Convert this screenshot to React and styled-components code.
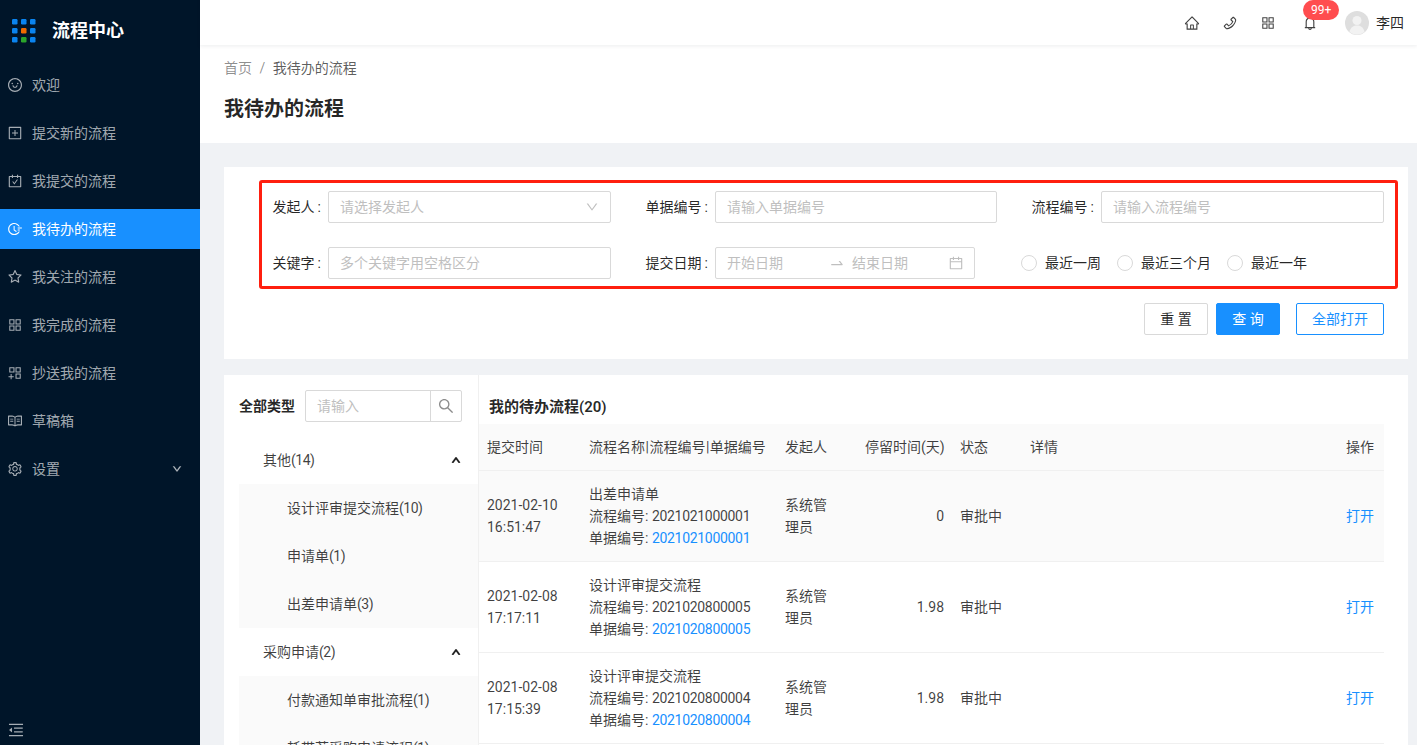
import React from "react";
import styled, { createGlobalStyle } from "styled-components";
import {
  AiOutlineSmile,
  AiOutlinePlusSquare,
  AiOutlineCarryOut,
  AiOutlineFieldTime,
  AiOutlineStar,
  AiOutlineAppstore,
  AiOutlineAppstoreAdd,
  AiOutlineRead,
  AiOutlineSetting,
  AiOutlineDown,
  AiOutlineUp,
  AiOutlineHome,
  AiOutlinePhone,
  AiOutlineBell,
  AiOutlineSearch,
  AiOutlineCalendar,
  AiOutlineSwapRight,
  AiOutlineMenuFold,
} from "react-icons/ai";

const GlobalStyle = createGlobalStyle`
  html, body {
    margin: 0;
    height: 100%;
    overflow: hidden;
  }
  body {
    font-family: "Roboto", "Noto Sans CJK SC", sans-serif;
    font-size: 14px;
    line-height: 22px;
    color: rgba(0, 0, 0, 0.85);
  }
  * {
    box-sizing: border-box;
  }
`;

const Layout = styled.div`
  display: flex;
  width: 1417px;
  height: 745px;
  overflow: hidden;
  background: #f0f2f5;
`;

const Sider = styled.aside`
  width: 200px;
  flex: none;
  height: 745px;
  background: #001529;
  display: flex;
  flex-direction: column;
`;

const Logo = styled.div`
  height: 61px;
  display: flex;
  align-items: center;
  padding-left: 12px;
  gap: 16px;
  margin-bottom: 4px;
`;

const LogoGrid = styled.svg`
  width: 24px;
  height: 24px;
  flex: none;
`;

const LogoText = styled.span`
  color: #fff;
  font-size: 18px;
  font-weight: 700;
`;

const Menu = styled.nav`
  flex: 1;
  display: flex;
  flex-direction: column;
  gap: 8px;
`;

const MenuItem = styled.div`
  height: 40px;
  display: flex;
  align-items: center;
  padding: 0 18px 0 7px;
  gap: 9px;
  color: ${(props) => (props.$active ? "#fff" : "rgba(255, 255, 255, 0.65)")};
  background: ${(props) => (props.$active ? "#1890ff" : "transparent")};
  svg {
    font-size: 16px;
    flex: none;
  }
`;

const MenuLabel = styled.span`
  flex: 1;
`;

const MenuCaret = styled(AiOutlineDown)`
  && {
    font-size: 10px;
  }
  stroke: currentColor;
  stroke-width: 60;
`;

const Collapse = styled.div`
  height: 32px;
  padding: 1px 0 0 7px;
  display: flex;
  align-items: center;
  color: rgba(255, 255, 255, 0.65);
  font-size: 18px;
`;

const Main = styled.main`
  flex: 1;
  min-width: 0;
  display: flex;
  flex-direction: column;
`;

const Header = styled.header`
  height: 45px;
  flex: none;
  background: #fff;
  box-shadow: 0 1px 4px rgba(0, 21, 41, 0.08);
  display: flex;
  justify-content: flex-end;
  align-items: center;
  padding-right: 13px;
  position: relative;
  z-index: 1;
`;

const HeaderIcon = styled.span`
  width: 38px;
  height: 45px;
  margin-left: ${(props) => props.$gap || 0}px;
  display: flex;
  align-items: center;
  justify-content: center;
  font-size: 16px;
  color: rgba(0, 0, 0, 0.75);
  position: relative;
`;

const Badge = styled.span`
  position: absolute;
  top: 0;
  left: 12px;
  height: 20px;
  padding: 0 8px;
  border-radius: 10px;
  background: #ff4d4f;
  color: #fff;
  font-size: 12px;
  line-height: 20px;
  white-space: nowrap;
`;

const User = styled.div`
  display: flex;
  align-items: center;
  gap: 7px;
  margin-left: 16px;
`;

const Avatar = styled.svg`
  width: 24px;
  height: 24px;
  flex: none;
`;

const PageHead = styled.div`
  background: #fff;
  height: 98px;
  flex: none;
  padding: 12px 24px 0;
`;

const Crumbs = styled.div`
  display: flex;
  gap: 7.5px;
  color: rgba(0, 0, 0, 0.45);
`;

const CrumbNow = styled.span`
  color: rgba(0, 0, 0, 0.65);
`;

const PageTitle = styled.h1`
  margin: 14px 0 0;
  font-size: 20px;
  line-height: 32px;
  font-weight: 600;
  color: rgba(0, 0, 0, 0.85);
`;

const Content = styled.div`
  flex: 1;
  min-height: 0;
  padding: 24px 9px 0 24px;
  display: flex;
  flex-direction: column;
  gap: 16px;
`;

const SearchCard = styled.section`
  background: #fff;
  padding: 13px 10px 24px 35px;
  flex: none;
`;

const Highlight = styled.div`
  border: 3px solid #ff1f0f;
  border-radius: 3px;
  padding: 8px 11px 7px 0;
  display: grid;
  grid-template-columns: 349px 386px 387px;
  row-gap: 24px;
`;

const FormItem = styled.div`
  display: flex;
  align-items: center;
  gap: 7px;
`;

const FormLabel = styled.label`
  width: ${(props) => props.$width}px;
  flex: none;
  text-align: right;
  color: rgba(0, 0, 0, 0.85);
`;

const Colon = styled.span`
  margin-left: 3px;
`;

const Field = styled.div`
  width: ${(props) => props.$width}px;
  height: 32px;
  flex: none;
  display: flex;
  align-items: center;
  border: 1px solid #d9d9d9;
  border-radius: 2px;
  padding: 0 ${(props) => props.$right || 11}px 0 11px;
  color: #bfbfbf;
  background: #fff;
  svg {
    flex: none;
  }
`;

const FieldText = styled.span`
  flex: 1;
  white-space: nowrap;
`;

const DateText = styled.span`
  width: 102px;
`;

const DateArrow = styled.span`
  width: 23px;
  display: flex;
  font-size: 16px;
`;

const RadioRow = styled.div`
  display: flex;
  align-items: center;
  gap: 16px;
  padding-left: 24px;
`;

const Radio = styled.label`
  display: flex;
  align-items: center;
  gap: 8px;
`;

const RadioDot = styled.span`
  width: 16px;
  height: 16px;
  border-radius: 50%;
  border: 1px solid #d9d9d9;
  background: #fff;
`;

const Actions = styled.div`
  display: flex;
  justify-content: flex-end;
  gap: 8px;
  margin: 14px 14px 0 0;
`;

const Button = styled.button`
  height: 32px;
  width: ${(props) => props.$width}px;
  margin-left: ${(props) => props.$gap || 0}px;
  border-radius: 2px;
  font: inherit;
  padding: 0;
  border: 1px solid ${(props) => (props.$tone === "plain" ? "#d9d9d9" : "#1890ff")};
  background: ${(props) => (props.$tone === "primary" ? "#1890ff" : "#fff")};
  color: ${(props) =>
    props.$tone === "primary" ? "#fff" : props.$tone === "ghost" ? "#1890ff" : "rgba(0, 0, 0, 0.85)"};
`;

const ListCard = styled.section`
  background: #fff;
  flex: 1;
  min-height: 0;
  display: flex;
  overflow: hidden;
`;

const TypePanel = styled.div`
  width: 255px;
  flex: none;
  padding: 15px 0 0 15px;
  border-right: 1px solid #f0f0f0;
`;

const TypeHead = styled.div`
  display: flex;
  align-items: center;
  gap: 10px;
  margin-bottom: 14px;
`;

const Strong = styled.span`
  font-weight: 600;
  color: rgba(0, 0, 0, 0.85);
`;

const TypeSearch = styled.div`
  width: 157px;
  height: 32px;
  display: flex;
  border: 1px solid #d9d9d9;
  border-radius: 2px;
  color: #bfbfbf;
`;

const TypeInput = styled.span`
  flex: 1;
  padding: 4px 11px;
`;

const TypeButton = styled.span`
  width: 31px;
  flex: none;
  display: flex;
  align-items: center;
  justify-content: center;
  border-left: 1px solid #d9d9d9;
  color: rgba(0, 0, 0, 0.45);
  font-size: 18px;
`;

const TreeRow = styled.div`
  height: 48px;
  display: flex;
  align-items: center;
  justify-content: space-between;
  padding: 0 17px 0 24px;
  color: rgba(0, 0, 0, 0.75);
  svg {
    font-size: 10px;
    stroke: currentColor;
    stroke-width: 110;
  }
`;

const TreeChildren = styled.div`
  background: #fafafa;
`;

const TreeChild = styled.div`
  height: 48px;
  display: flex;
  align-items: center;
  padding-left: 48px;
  white-space: nowrap;
  color: rgba(0, 0, 0, 0.75);
`;

const Count = styled.span`
  letter-spacing: -0.5px;
`;

const ListPanel = styled.div`
  flex: 1;
  min-width: 0;
  padding-right: 24px;
`;

const ListTitle = styled.div`
  height: 49px;
  padding: 21px 0 0 10px;
  font-size: 15px;
  font-weight: 600;
`;

const Table = styled.table`
  width: 905px;
  table-layout: fixed;
  border-collapse: collapse;
`;

const Th = styled.th`
  height: 46px;
  padding: 0 ${(props) => props.$right || 8}px 0 8px;
  background: #fafafa;
  border-bottom: 1px solid #f0f0f0;
  font-weight: 400;
  white-space: nowrap;
  text-align: ${(props) => props.$align || "left"};
  color: rgba(0, 0, 0, 0.75);
`;

const Pipe = styled.span`
  padding: 0 0.5px;
`;

const Tr = styled.tr`
  background: ${(props) => (props.$hover ? "#fafafa" : "#fff")};
`;

const Td = styled.td`
  height: 91px;
  padding: 0 ${(props) => props.$right || 8}px 0 8px;
  border-bottom: 1px solid #f0f0f0;
  text-align: ${(props) => props.$align || "left"};
  color: rgba(0, 0, 0, 0.75);
`;

const Starter = styled.div`
  max-width: 50px;
`;

const Num = styled.span`
  letter-spacing: -0.3px;
`;

const OpenLink = styled.a`
  color: #1890ff;
`;

const menu = [
  ["欢迎", AiOutlineSmile],
  ["提交新的流程", AiOutlinePlusSquare],
  ["我提交的流程", AiOutlineCarryOut],
  ["我待办的流程", AiOutlineFieldTime, true],
  ["我关注的流程", AiOutlineStar],
  ["我完成的流程", AiOutlineAppstore],
  ["抄送我的流程", AiOutlineAppstoreAdd],
  ["草稿箱", AiOutlineRead],
];

const rows = [
  {
    time: ["2021-02-10", "16:51:47"],
    name: "出差申请单",
    flow: "2021021000001",
    stay: "0",
    hover: true,
  },
  {
    time: ["2021-02-08", "17:17:11"],
    name: "设计评审提交流程",
    flow: "2021020800005",
    stay: "1.98",
  },
  {
    time: ["2021-02-08", "17:15:39"],
    name: "设计评审提交流程",
    flow: "2021020800004",
    stay: "1.98",
  },
];

const dots = [
  ["#0a84f0", "#0a84f0", "#0a84f0"],
  ["#0a84f0", "#f06a00", "#0a84f0"],
  ["#0a84f0", "#2ba52b", "#0a84f0"],
];

const App = () => {
  return (
    <Layout>
      <GlobalStyle />
      <Sider>
        <Logo>
          <LogoGrid viewBox="0 0 24 24">
            {dots.map((line, y) =>
              line.map((fill, x) => (
                <rect key={`${x}-${y}`} x={x * 9} y={y * 9} width="5.5" height="5.5" rx="1.2" fill={fill} />
              ))
            )}
          </LogoGrid>
          <LogoText>流程中心</LogoText>
        </Logo>
        <Menu>
          {menu.map(([label, Icon, active]) => (
            <MenuItem key={label} $active={active}>
              <Icon />
              <MenuLabel>{label}</MenuLabel>
            </MenuItem>
          ))}
          <MenuItem>
            <AiOutlineSetting />
            <MenuLabel>设置</MenuLabel>
            <MenuCaret />
          </MenuItem>
        </Menu>
        <Collapse>
          <AiOutlineMenuFold />
        </Collapse>
      </Sider>
      <Main>
        <Header>
          <HeaderIcon>
            <AiOutlineHome />
          </HeaderIcon>
          <HeaderIcon>
            <AiOutlinePhone />
          </HeaderIcon>
          <HeaderIcon>
            <AiOutlineAppstore />
          </HeaderIcon>
          <HeaderIcon $gap={4}>
            <AiOutlineBell />
            <Badge>99+</Badge>
          </HeaderIcon>
          <User>
            <Avatar viewBox="0 0 24 24">
              <circle cx="12" cy="12" r="12" fill="#dedede" />
              <circle cx="12" cy="9.500" r="4.500" fill="#f2f2f2" />
              <path d="M4.500 21c1-5 4-6.500 7.500-6.500s6.500 1.500 7.500 6.500a12 12 0 0 1-15 0z" fill="#f2f2f2" />
            </Avatar>
            <span>李四</span>
          </User>
        </Header>
        <PageHead>
          <Crumbs>
            <span>首页</span>
            <span>/</span>
            <CrumbNow>我待办的流程</CrumbNow>
          </Crumbs>
          <PageTitle>我待办的流程</PageTitle>
        </PageHead>
        <Content>
          <SearchCard>
            <Highlight>
              <FormItem>
                <FormLabel $width={59}>
                  发起人<Colon>:</Colon>
                </FormLabel>
                <Field $width={283}>
                  <FieldText>请选择发起人</FieldText>
                  <AiOutlineDown size={14} />
                </Field>
              </FormItem>
              <FormItem>
                <FormLabel $width={97}>
                  单据编号<Colon>:</Colon>
                </FormLabel>
                <Field $width={282}>
                  <FieldText>请输入单据编号</FieldText>
                </Field>
              </FormItem>
              <FormItem>
                <FormLabel $width={97}>
                  流程编号<Colon>:</Colon>
                </FormLabel>
                <Field $width={283}>
                  <FieldText>请输入流程编号</FieldText>
                </Field>
              </FormItem>
              <FormItem>
                <FormLabel $width={59}>
                  关键字<Colon>:</Colon>
                </FormLabel>
                <Field $width={283}>
                  <FieldText>多个关键字用空格区分</FieldText>
                </Field>
              </FormItem>
              <FormItem>
                <FormLabel $width={97}>
                  提交日期<Colon>:</Colon>
                </FormLabel>
                <Field $width={260} $right={10}>
                  <DateText>开始日期</DateText>
                  <DateArrow>
                    <AiOutlineSwapRight />
                  </DateArrow>
                  <FieldText>结束日期</FieldText>
                  <AiOutlineCalendar size={16} />
                </Field>
              </FormItem>
              <RadioRow>
                <Radio>
                  <RadioDot />
                  最近一周
                </Radio>
                <Radio>
                  <RadioDot />
                  最近三个月
                </Radio>
                <Radio>
                  <RadioDot />
                  最近一年
                </Radio>
              </RadioRow>
            </Highlight>
            <Actions>
              <Button $width={64} $tone="plain">
                重 置
              </Button>
              <Button $width={64} $tone="primary">
                查 询
              </Button>
              <Button $width={88} $gap={8} $tone="ghost">
                全部打开
              </Button>
            </Actions>
          </SearchCard>
          <ListCard>
            <TypePanel>
              <TypeHead>
                <Strong>全部类型</Strong>
                <TypeSearch>
                  <TypeInput>请输入</TypeInput>
                  <TypeButton>
                    <AiOutlineSearch />
                  </TypeButton>
                </TypeSearch>
              </TypeHead>
              <TreeRow>
                <span>
                  其他<Count>(14)</Count>
                </span>
                <AiOutlineUp />
              </TreeRow>
              <TreeChildren>
                <TreeChild>
                  设计评审提交流程<Count>(10)</Count>
                </TreeChild>
                <TreeChild>
                  申请单<Count>(1)</Count>
                </TreeChild>
                <TreeChild>
                  出差申请单<Count>(3)</Count>
                </TreeChild>
              </TreeChildren>
              <TreeRow>
                <span>
                  采购申请<Count>(2)</Count>
                </span>
                <AiOutlineUp />
              </TreeRow>
              <TreeChildren>
                <TreeChild>
                  付款通知单审批流程<Count>(1)</Count>
                </TreeChild>
                <TreeChild>
                  耗带荐采购申请流程<Count>(1)</Count>
                </TreeChild>
              </TreeChildren>
            </TypePanel>
            <ListPanel>
              <ListTitle>我的待办流程(20)</ListTitle>
              <Table>
                <colgroup>
                  <col width="102" />
                  <col width="196" />
                  <col width="80" />
                  <col width="95" />
                  <col width="70" />
                  <col />
                  <col width="70" />
                </colgroup>
                <thead>
                  <tr>
                    <Th>提交时间</Th>
                    <Th>
                      流程名称<Pipe>|</Pipe>流程编号<Pipe>|</Pipe>单据编号
                    </Th>
                    <Th>发起人</Th>
                    <Th $align="right">停留时间(天)</Th>
                    <Th>状态</Th>
                    <Th>详情</Th>
                    <Th $align="right" $right={10}>
                      操作
                    </Th>
                  </tr>
                </thead>
                <tbody>
                  {rows.map((row) => (
                    <Tr key={row.flow} $hover={row.hover}>
                      <Td>
                        {row.time[0]}
                        <br />
                        {row.time[1]}
                      </Td>
                      <Td>
                        {row.name}
                        <br />
                        流程编号: <Num>{row.flow}</Num>
                        <br />
                        单据编号:{" "}
                        <OpenLink>
                          <Num>{row.flow}</Num>
                        </OpenLink>
                      </Td>
                      <Td>
                        <Starter>系统管理员</Starter>
                      </Td>
                      <Td $align="right">{row.stay}</Td>
                      <Td>审批中</Td>
                      <Td />
                      <Td $align="right" $right={10}>
                        <OpenLink>打开</OpenLink>
                      </Td>
                    </Tr>
                  ))}
                </tbody>
              </Table>
            </ListPanel>
          </ListCard>
        </Content>
      </Main>
    </Layout>
  );
};

export default App;
